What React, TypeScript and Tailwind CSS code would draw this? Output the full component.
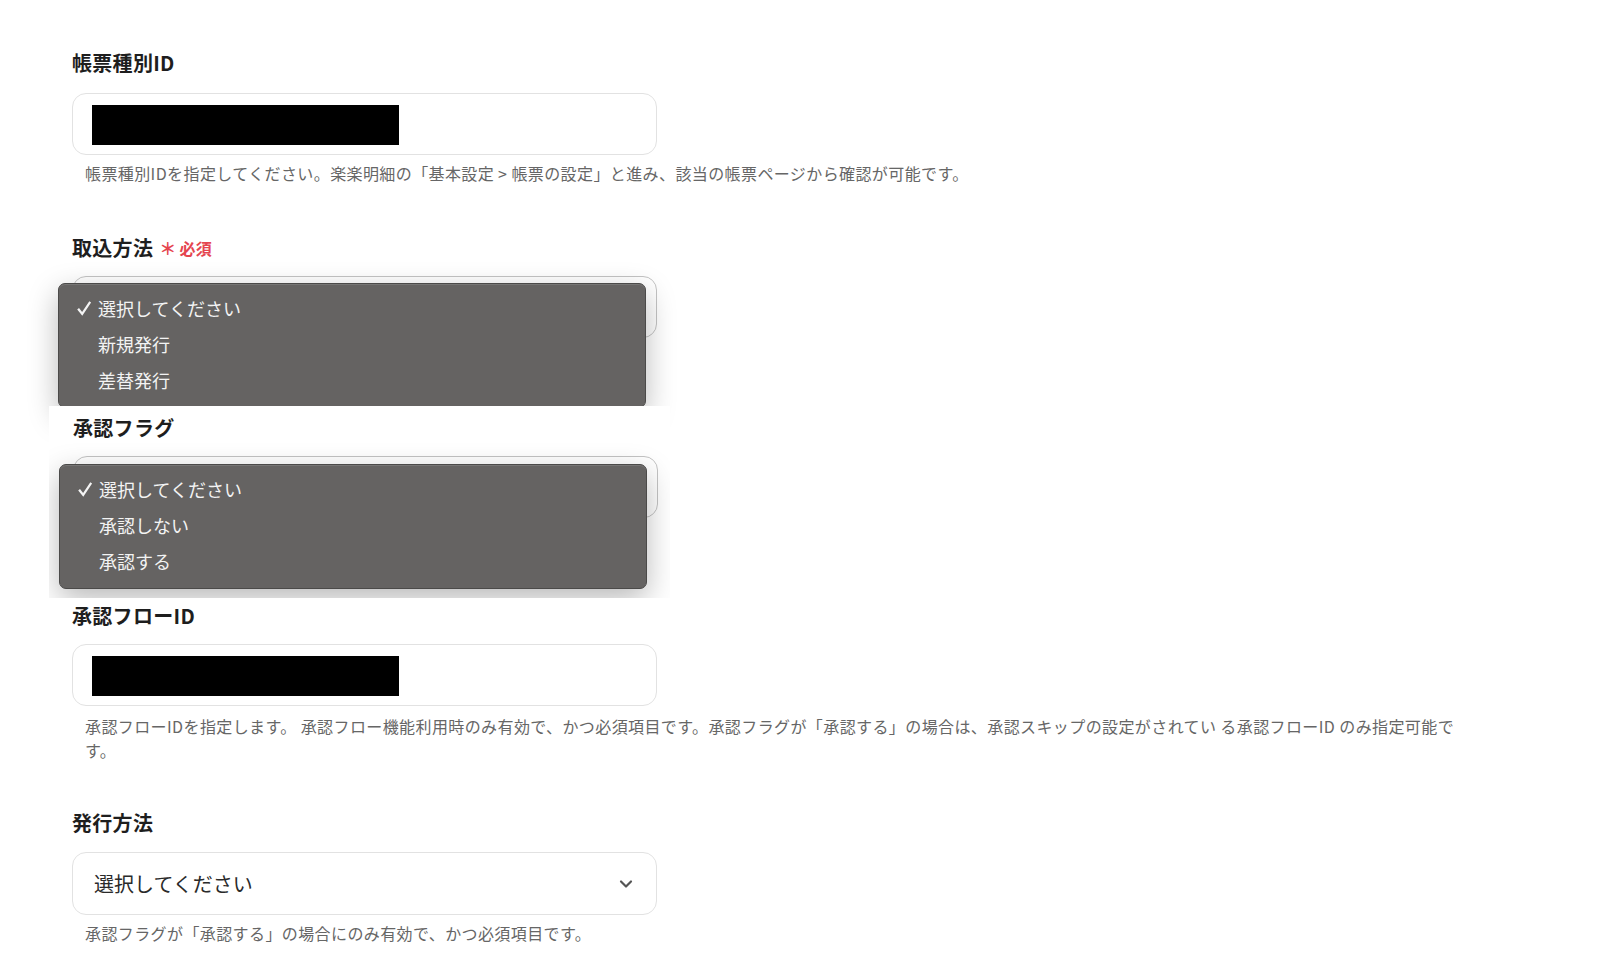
import { ChevronDown } from "lucide-react";

const menuOne = ["選択してください", "新規発行", "差替発行"];
const menuTwo = ["選択してください", "承認しない", "承認する"];

function Label({ text, required }: { text: string; required?: boolean }) {
  return (
    <div className="flex items-center h-7 mb-[14px] text-[20px] font-bold text-[#1e1e1e] leading-7 tracking-[0.3px]">
      <span>{text}</span>
      {required && (
        <span className="ml-[6px] flex items-center text-[16px] text-[#e5454f] font-bold">
          <span className="text-[17px] mr-[3px]">＊</span>
          必須
        </span>
      )}
    </div>
  );
}

function Help({ children, className = "mt-[8px]" }: { children: React.ReactNode; className?: string }) {
  return (
    <p className={`${className} pl-[13px] text-[16px] leading-6 tracking-[0.4px] text-[#666666]`}>{children}</p>
  );
}

function Redacted() {
  return (
    <div className="h-[62px] w-[585px] rounded-[14px] border border-[#e2e2e2] bg-white pl-[19px] pt-[11px]">
      <div className="h-[40px] w-[307px] bg-black" />
    </div>
  );
}

function CheckMark() {
  return (
    <svg width="16" height="17" viewBox="0 0 16 17">
      <path d="M1.2 9.6 L3 8.1 L6.1 11.9 L13.3 1.2 L15.1 2.4 L6.3 15.8 Z" fill="#f4f4f4" />
    </svg>
  );
}

function OpenSelect({ items, top }: { items: string[]; top: string }) {
  return (
    <div className="relative h-[62px] w-[585px]">
      <div className="h-[62px] w-[585px] rounded-[14px] border border-[#c4c4c4] bg-white" />
      <div
        className={`absolute left-[-14px] ${top} z-10 w-[588px] rounded-[7px] border border-[#4b4a49] bg-[#656362] pt-[6px] pb-[9px] shadow-[inset_0_1px_0_rgba(255,255,255,0.12),0_10px_30px_rgba(0,0,0,0.28)]`}
      >
        {items.map((item, i) => (
          <div key={item} className="flex h-9 items-center pl-[17px] text-[18px] text-[#f3f3f3]">
            <span className="flex w-[22px] items-center">{i === 0 && <CheckMark />}</span>
            <span>{item}</span>
          </div>
        ))}
      </div>
    </div>
  );
}

export default function App() {
  return (
    <div className="min-h-screen bg-white font-['Noto_Sans_CJK_JP','Noto_Sans',sans-serif]">
      <div className="pl-[72px] pt-[49px] pb-10">
        {/* 帳票種別ID */}
        <section>
          <Label text="帳票種別ID" />
          <div className="pt-[2px]">
            <Redacted />
          </div>
          <Help className="mt-[6px]">
            帳票種別IDを指定してください。楽楽明細の「基本設定 &gt; 帳票の設定」と進み、該当の帳票ページから確認が可能です。
          </Help>
        </section>

        {/* 取込方法 */}
        <section className="mt-[49px]">
          <Label text="取込方法" required />
          <OpenSelect items={menuOne} top="top-[7px]" />
        </section>

        {/* 承認フラグ (pasted capture) */}
        <section className="relative z-20 mt-[68px] ml-[-23px] w-[621px] overflow-hidden bg-white pl-[24px] pt-[8px] pb-[80px]">
          <Label text="承認フラグ" />
          <OpenSelect items={menuTwo} top="top-[8px]" />
        </section>

        {/* 承認フローID */}
        <section className="mt-[4px]">
          <Label text="承認フローID" />
          <Redacted />
          <Help>
            承認フローIDを指定します。 承認フロー機能利用時のみ有効で、かつ必須項目です。承認フラグが「承認する」の場合は、承認スキップの設定がされてい る承認フローID のみ指定可能で
            <br />
            す。
          </Help>
        </section>

        {/* 発行方法 */}
        <section className="mt-[47px]">
          <Label text="発行方法" />
          <div className="pt-[1px]">
            <div className="flex h-[63px] w-[585px] items-center justify-between rounded-[14px] border border-[#e2e2e2] bg-white pl-[21px] pr-[20px]">
              <span className="text-[20px] text-[#2a2a2a]">選択してください</span>
              <ChevronDown size={20} strokeWidth={2.6} className="text-[#555555]" />
            </div>
          </div>
          <Help className="mt-[6px]">承認フラグが「承認する」の場合にのみ有効で、かつ必須項目です。</Help>
        </section>
      </div>
    </div>
  );
}
